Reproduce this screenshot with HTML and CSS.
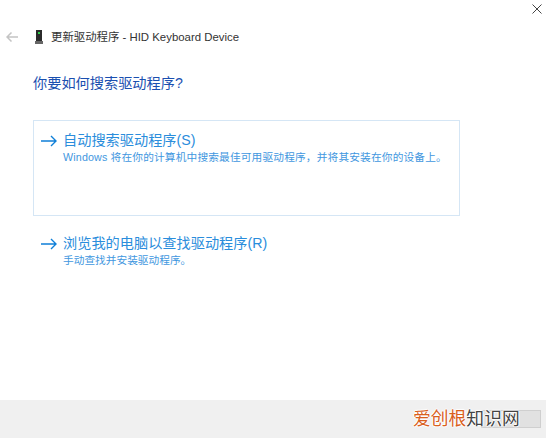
FILE: index.html
```html
<!DOCTYPE html>
<html lang="zh-CN">
<head>
    <meta charset="UTF-8">
    <title>更新驱动程序</title>
    <link rel="stylesheet" href="styles.css">
</head>
<body>
    <div class="wrap">
        <div class="closebar">
            <svg class="close" width="10" height="10" viewBox="0 0 10 10"><path d="M0.5 0.5L9.5 9.5M9.5 0.5L0.5 9.5" stroke="#444" stroke-width="1" fill="none"/></svg>
        </div>
        <div class="titlebar">
            <svg class="back" width="12" height="10" viewBox="0 0 12 10"><path d="M5.5 0.5L1 5L5.5 9.5M1 5H12" stroke="#c4c4c4" stroke-width="1.5" fill="none"/></svg>
            <svg class="device" width="8" height="14" viewBox="0 0 8 14"><rect x="1" y="0" width="6" height="11" fill="#2b2b2b"/><rect x="0" y="11" width="8" height="3" fill="#666"/><rect x="3" y="2" width="2" height="2" fill="#2fd04a"/></svg>
            <span class="title">更新驱动程序 - HID Keyboard Device</span>
        </div>
        <div class="main">
            <h1>你要如何搜索驱动程序?</h1>
            <div class="option first">
                <svg class="arrow" width="16" height="12" viewBox="0 0 16 12"><path d="M10 1L15 6L10 11M0 6H15" stroke="#0f7fd8" stroke-width="1.4" fill="none"/></svg>
                <div>
                    <p class="name">自动搜索驱动程序(S)</p>
                    <p class="desc">Windows 将在你的计算机中搜索最佳可用驱动程序，并将其安装在你的设备上。</p>
                </div>
            </div>
            <div class="option">
                <svg class="arrow" width="16" height="12" viewBox="0 0 16 12"><path d="M10 1L15 6L10 11M0 6H15" stroke="#0f7fd8" stroke-width="1.4" fill="none"/></svg>
                <div>
                    <p class="name">浏览我的电脑以查找驱动程序(R)</p>
                    <p class="desc">手动查找并安装驱动程序。</p>
                </div>
            </div>
        </div>
        <div class="footer">
            <div class="btn"></div>
        </div>
        <div class="mark"><span class="red">爱创根</span>知识网</div>
    </div>
</body>
</html>
```

FILE: styles.css
```css
*{
    padding: 0;
    margin: 0;
    box-sizing: border-box;
}
body{
    font-family: "Liberation Sans", "Noto Sans CJK SC", sans-serif;
    background-color: #fff;
}
.wrap{
    width: 546px;
    height: 438px;
    position: relative;
    display: flex;
    flex-direction: column;
    overflow: hidden;
}
.closebar{
    height: 30px;
    display: flex;
    justify-content: flex-end;
    padding: 4px 4px 0 0;
}
.close{
    display: block;
}
.titlebar{
    height: 14px;
    display: flex;
    align-items: center;
    padding-left: 6px;
}
.back{
    margin-right: 17px;
}
.device{
    margin-right: 8px;
}
.title{
    font-size: 11.4px;
    line-height: 12px;
    color: #333;
}
.main{
    flex: 1;
    padding: 29px 86px 0 33px;
}
h1{
    font-size: 14.2px;
    font-weight: normal;
    line-height: 20px;
    color: #1a4fb0;
    margin-bottom: 27px;
}
.option{
    display: flex;
    padding: 9px 0 0 7px;
    height: 96px;
    border: 1px solid #d5e6f5;
}
.option + .option{
    height: auto;
    border-color: transparent;
    padding-top: 8px;
    margin-top: 8px;
}
.arrow{
    margin: 5px 6px 0 0;
    flex-shrink: 0;
}
.name{
    font-size: 14.2px;
    line-height: 20px;
    color: #2a8ddc;
}
.desc{
    font-size: 10.7px;
    line-height: 14px;
    color: #3f97e0;
    white-space: nowrap;
}
.first .desc{
    letter-spacing: 0.16px;
}
.footer{
    height: 38px;
    background-color: #f0f0f0;
    display: flex;
    justify-content: flex-end;
    padding: 10px 5px 0 0;
}
.btn{
    width: 60px;
    height: 18px;
    background-color: #e1e1e1;
    border: 1px solid #cfcfcf;
}
.mark{
    position: absolute;
    left: 413px;
    top: 407px;
    font-size: 17.8px;
    line-height: 24px;
    white-space: nowrap;
    color: #444;
    text-shadow: 1px 0 1px #fff, -1px 0 1px #fff, 0 1px 1px #fff, 0 -1px 1px #fff;
}
.red{
    color: #d9601c;
}
```
